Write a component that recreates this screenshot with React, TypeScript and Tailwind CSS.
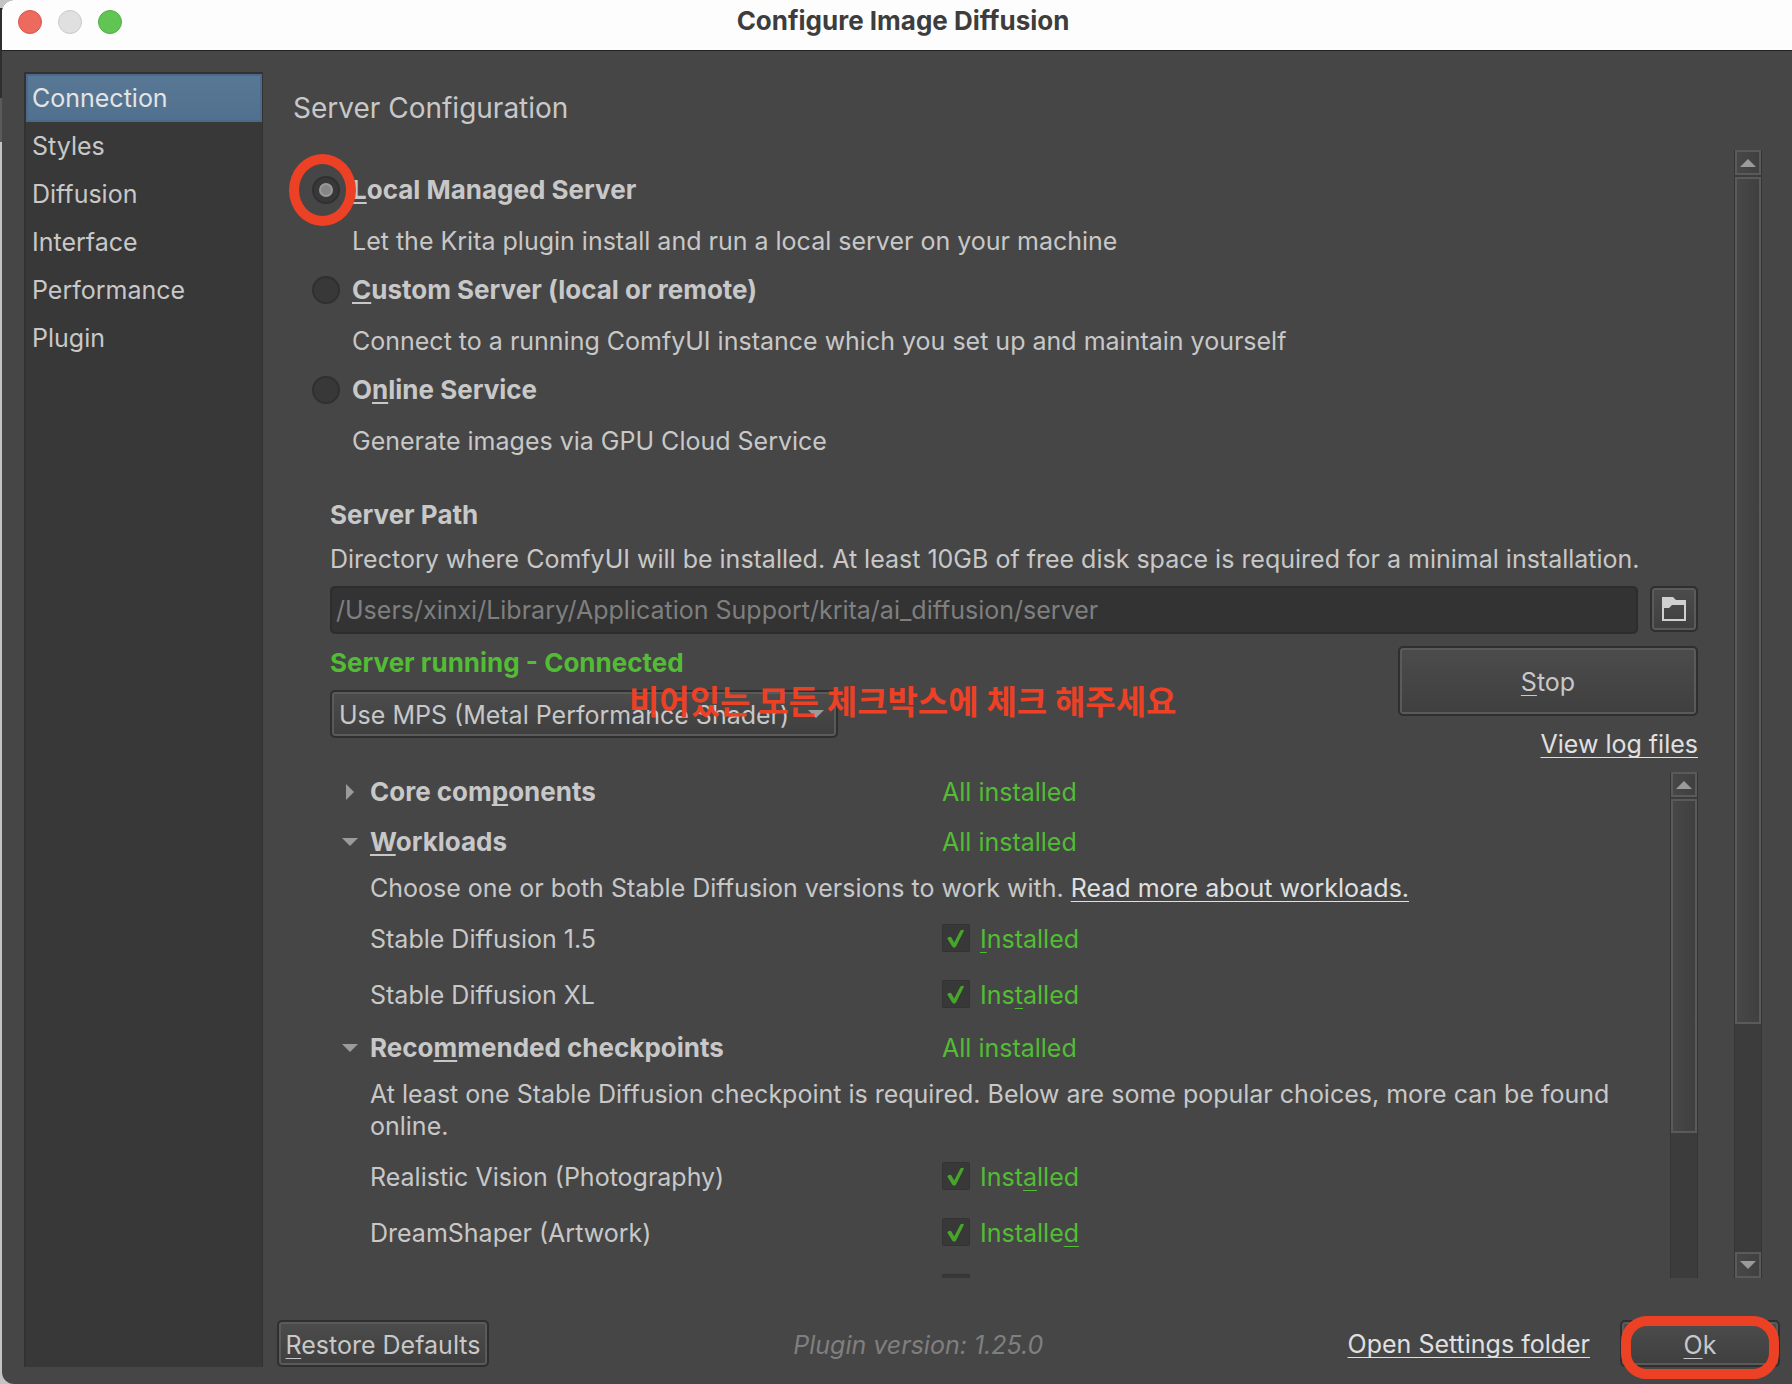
import { useState, type ReactNode } from "react";

const raised =
  "rounded-[5px] border-2 border-[#2f2f2f] bg-linear-to-b from-[#4c4c4c] to-[#3f3f3f] shadow-[inset_0_0_0_2px_#5a5a5a]";

/** Renders a label whose accelerator letter is underlined. */
function Mnemonic({ text, at, bold = false }: { text: string; at: number; bold?: boolean }) {
  return (
    <span className="whitespace-pre">
      {text.slice(0, at)}
      <span
        className={
          bold
            ? "underline decoration-2 underline-offset-[3px] [text-decoration-skip-ink:none]"
            : "underline decoration-1 underline-offset-[4px] [text-decoration-skip-ink:none]"
        }
      >
        {text[at]}
      </span>
      {text.slice(at + 1)}
    </span>
  );
}

function TextLink({ children }: { children: ReactNode }) {
  return (
    <a
      href="#"
      className="whitespace-nowrap text-[#e0e0e0] underline decoration-1 underline-offset-[4px] [text-decoration-skip-ink:none]"
    >
      {children}
    </a>
  );
}

const sections = ["Connection", "Styles", "Diffusion", "Interface", "Performance", "Plugin"];

function Sidebar() {
  const [active, setActive] = useState("Connection");
  return (
    <nav className="mt-[21px] mb-[17px] ml-[22px] flex w-[239px] shrink-0 flex-col border-t-2 border-r border-l-2 border-[#323232] bg-[#383838]">
      {sections.map((name) => (
        <button
          key={name}
          type="button"
          onClick={() => setActive(name)}
          className={
            name === active
              ? "h-12 bg-linear-to-b from-[#587896] to-[#50708d] px-1.5 text-left text-[#e4e4e4] shadow-[inset_0_0_0_2px_#4a6a88]"
              : "h-12 px-1.5 text-left"
          }
        >
          {name}
        </button>
      ))}
    </nav>
  );
}

const servers = [
  { id: "local", title: "Local Managed Server", at: 0, note: "Let the Krita plugin install and run a local server on your machine" },
  { id: "custom", title: "Custom Server (local or remote)", at: 0, note: "Connect to a running ComfyUI instance which you set up and maintain yourself" },
  { id: "online", title: "Online Service", at: 1, note: "Generate images via GPU Cloud Service" },
];

function ServerChoice() {
  return (
    <div role="radiogroup" aria-label="Server type" className="pt-[15px]">
      {servers.map((s) => (
        <div key={s.id}>
          <div className="relative flex h-[50px] items-center">
            <input
              id={s.id}
              type="radio"
              name="server"
              defaultChecked={s.id === "local"}
              className="peer size-7 shrink-0 appearance-none rounded-full border-2 border-[#303030] bg-[#383838]"
            />
            <span className="pointer-events-none absolute left-[7px] hidden size-3.5 rounded-full border-2 border-[#9a9a9a] bg-[#868686] peer-checked:block" />
            <label htmlFor={s.id} className="pl-3 text-[26px] leading-[50px] font-bold">
              <Mnemonic text={s.title} at={s.at} bold />
            </label>
            {s.id === "local" && (
              <span className="pointer-events-none absolute -top-[11px] -left-[23px] h-[72px] w-[67px] rounded-[50%] border-10 border-[#ec4125]" />
            )}
          </div>
          <p className="h-[50px] pl-10 leading-[52px]">{s.note}</p>
        </div>
      ))}
    </div>
  );
}

function Arrow({ dir }: { dir: "up" | "down" }) {
  return (
    <svg width="16" height="8" viewBox="0 0 16 8" fill="#9b9b9b" aria-hidden="true" className="block">
      <path d={dir === "up" ? "M8 0 16 8H0z" : "M0 0h16L8 8z"} />
    </svg>
  );
}

const scrollPart = "border-2 border-[#5a5a5a] bg-linear-to-r from-[#474747] to-[#404040]";

function FolderIcon() {
  return (
    <svg width="24" height="24" viewBox="0 0 24 24" aria-hidden="true">
      <path fill="#cfcfcf" fillRule="evenodd" d="M0 0h11l3 3h10v21H0zM2 11v11h20V8H10l-3 3z" />
    </svg>
  );
}

function GroupRow({ title, at, open }: { title: string; at: number; open: boolean }) {
  return (
    <div className="flex h-10 items-center">
      <button
        type="button"
        aria-expanded={open}
        className="flex h-10 w-[612px] items-center text-left text-[26px] leading-8 font-bold"
      >
        <span className="flex w-10 shrink-0 justify-center">
          {open ? (
            <Arrow dir="down" />
          ) : (
            <svg width="8" height="16" viewBox="0 0 8 16" fill="#9b9b9b" aria-hidden="true">
              <path d="M0 0 8 8 0 16z" />
            </svg>
          )}
        </span>
        <Mnemonic text={title} at={at} bold />
      </button>
      <span className="text-[#52bd34]">All installed</span>
    </div>
  );
}

function PackageRow({ id, name, at }: { id: string; name: string; at: number }) {
  return (
    <div className="flex h-[30px] items-start pl-10">
      <span className="w-[572px] shrink-0 leading-[30px]">{name}</span>
      <span className="relative flex items-start">
        <input
          id={id}
          type="checkbox"
          defaultChecked
          aria-label={`Install ${name}`}
          className="peer size-7 shrink-0 appearance-none rounded-[2px] border border-[#333333] bg-[#383838]"
        />
        <svg
          className="pointer-events-none absolute top-1 left-1 hidden size-5 peer-checked:block"
          viewBox="0 0 20 20"
          aria-hidden="true"
        >
          <path
            fill="#48a52c"
            d="M1.3 10.4 2.2 9.2 4.6 8.8 5.4 9.6 8.2 14.6 14.4 2.6 15.2 1.9 17.6 1.7 17.8 3 10 18.4 9 19.6 7.2 19.6 6.2 18.6z"
          />
        </svg>
        <label htmlFor={id} className="pl-2.5 leading-[30px] text-[#52bd34]">
          <Mnemonic text="Installed" at={at} />
        </label>
      </span>
    </div>
  );
}

function Packages() {
  return (
    <div className="mt-2.5 flex min-h-0 flex-1">
      <div className="min-w-0 flex-1 overflow-hidden">
        <GroupRow title="Core components" at={8} open={false} />
        <div className="h-2.5" />
        <GroupRow title="Workloads" at={0} open />
        <p className="mt-2.5 pl-10 leading-8">
          Choose one or both Stable Diffusion versions to work with. <TextLink>Read more about workloads.</TextLink>
        </p>
        <div className="mt-5 flex flex-col gap-[26px]">
          <PackageRow id="sd15" name="Stable Diffusion 1.5" at={0} />
          <PackageRow id="sdxl" name="Stable Diffusion XL" at={3} />
        </div>
        <div className="h-[18px]" />
        <GroupRow title="Recommended checkpoints" at={4} open />
        <p className="mt-2.5 pr-10 pl-10 leading-8">
          At least one Stable Diffusion checkpoint is required. Below are some popular choices, more can be found
          online.
        </p>
        <div className="mt-5 flex flex-col gap-[26px]">
          <PackageRow id="realistic" name="Realistic Vision (Photography)" at={4} />
          <PackageRow id="dream" name="DreamShaper (Artwork)" at={8} />
          <div className="h-[30px] pl-[612px]">
            <input
              type="checkbox"
              aria-label="Next checkpoint"
              className="block size-7 appearance-none rounded-[2px] border border-[#333333] bg-[#383838]"
            />
          </div>
        </div>
      </div>
      <div className="flex w-7 shrink-0 flex-col gap-0.5 border-x border-[#353535] bg-[#3c3c3c]">
        <button type="button" aria-label="Scroll list up" className={`flex h-[25px] items-center justify-center ${scrollPart}`}>
          <Arrow dir="up" />
        </button>
        <div className={`grow-331 ${scrollPart}`} />
        <div className="grow-144" />
      </div>
    </div>
  );
}

export default function App() {
  return (
    <div className="relative h-screen overflow-hidden bg-[#c4c4c4] pl-0.5 font-['Inter','Noto_Sans_CJK_KR',sans-serif] text-[25px] leading-8 text-[#c8c8c8]">
      {/* Sliver of the window behind the dialog */}
      <div className="absolute top-2 left-0 h-[90px] w-3 bg-[#2e2e2e]" />
      <div className="absolute top-[98px] left-0 h-11 w-3 bg-[#5a5a5a]" />

      <div className="relative flex h-full flex-col overflow-hidden rounded-l-[12px] bg-[#464646]">
        <header className="relative flex h-[51px] shrink-0 items-center justify-center border-b border-[#222222] bg-[#fdfdfd] pb-2">
          <div className="absolute top-2.5 left-4 flex gap-4">
            <button type="button" aria-label="Close" className="size-6 rounded-full border border-[#d9564b] bg-[#ed6a5e]" />
            <button type="button" aria-label="Minimize" className="size-6 rounded-full border border-[#c9c9c9] bg-[#e0e0e0]" />
            <button type="button" aria-label="Zoom" className="size-6 rounded-full border border-[#52ae44] bg-[#61c554]" />
          </div>
          <h1 className="pl-3 text-[26px] leading-8 font-bold text-[#3d3d3d]">Configure Image Diffusion</h1>
        </header>

        <div className="flex min-h-0 flex-1">
          <Sidebar />
          <main className="mr-3 mb-[17px] ml-3.5 flex min-w-0 flex-1 flex-col pt-[35px]">
            <h2 className="pl-4 text-[28px] leading-11">Server Configuration</h2>

            <div className="mt-5 mr-[18px] flex min-h-0 flex-1 gap-9 pl-[35px]">
              <div className="flex min-w-0 flex-1 flex-col">
                <ServerChoice />
                <section className="mt-7 flex min-h-0 flex-1 flex-col pl-[18px]">
                  <label htmlFor="path" className="text-[26px] leading-11 font-bold">
                    Server Path
                  </label>
                  <p className="leading-11 whitespace-nowrap">
                    Directory where ComfyUI will be installed. At least 10GB of free disk space is required for a minimal
                    installation.
                  </p>
                  <div className="mt-[5px] flex gap-3">
                    <input
                      id="path"
                      type="text"
                      disabled
                      defaultValue="/Users/xinxi/Library/Application Support/krita/ai_diffusion/server"
                      className="h-12 min-w-0 flex-1 rounded-[5px] border-2 border-[#2d2d2d] bg-[#333333] px-1 text-[#7f7f7f]"
                    />
                    <button type="button" aria-label="Browse" className={`flex h-[46px] w-12 items-center justify-center ${raised}`}>
                      <FolderIcon />
                    </button>
                  </div>

                  <div className="mt-3 flex justify-between">
                    <div className="relative">
                      <p className="h-[34px] text-[26px] leading-[34px] font-bold text-[#52bd34]">
                        Server running - Connected
                      </p>
                      <div className="relative mt-2.5 w-[508px]">
                        <select aria-label="Backend" className={`h-12 w-full appearance-none pt-0.5 pr-8 pl-[7px] ${raised}`}>
                          <option>Use MPS (Metal Performance Shader)</option>
                        </select>
                        <span className="pointer-events-none absolute top-5 right-3.5">
                          <Arrow dir="down" />
                        </span>
                      </div>
                      <p className="pointer-events-none absolute top-9 left-[299px] text-[33px] leading-10 font-bold whitespace-nowrap text-[#ec4125]">
                        비어있는 모든 체크박스에 체크 해주세요
                      </p>
                    </div>
                    <div className="flex w-[300px] flex-col">
                      <button type="button" className={`h-[70px] pt-0.5 ${raised}`}>
                        <Mnemonic text="Stop" at={0} />
                      </button>
                      <div className="mt-2.5 h-9 text-right leading-9">
                        <TextLink>View log files</TextLink>
                      </div>
                    </div>
                  </div>

                  <Packages />
                </section>
              </div>

              <div className="flex w-7 shrink-0 flex-col gap-0.5 border-x border-[#353535] bg-[#3c3c3c]">
                <button type="button" aria-label="Scroll up" className={`flex h-[25px] items-center justify-center ${scrollPart}`}>
                  <Arrow dir="up" />
                </button>
                <div className={`grow-845 ${scrollPart}`} />
                <div className="grow-224" />
                <button type="button" aria-label="Scroll down" className={`flex h-[26px] items-center justify-center ${scrollPart}`}>
                  <Arrow dir="down" />
                </button>
              </div>
            </div>

            <footer className="mt-[42px] flex items-center">
              <button type="button" className={`h-[47px] w-[212px] pt-0.5 whitespace-nowrap ${raised}`}>
                <Mnemonic text="Restore Defaults" at={0} />
              </button>
              <p className="flex-1 pt-0.5 text-center text-[#7f7f7f] italic">Plugin version: 1.25.0</p>
              <TextLink>Open Settings folder</TextLink>
              <div className="relative ml-[30px]">
                <button type="button" className={`block h-[47px] w-40 pt-0.5 ${raised}`}>
                  <Mnemonic text="Ok" at={0} />
                </button>
                <span className="pointer-events-none absolute inset-x-px -top-1 -bottom-3 rounded-[26px] border-10 border-[#ec4125]" />
              </div>
            </footer>
          </main>
        </div>
      </div>
    </div>
  );
}
